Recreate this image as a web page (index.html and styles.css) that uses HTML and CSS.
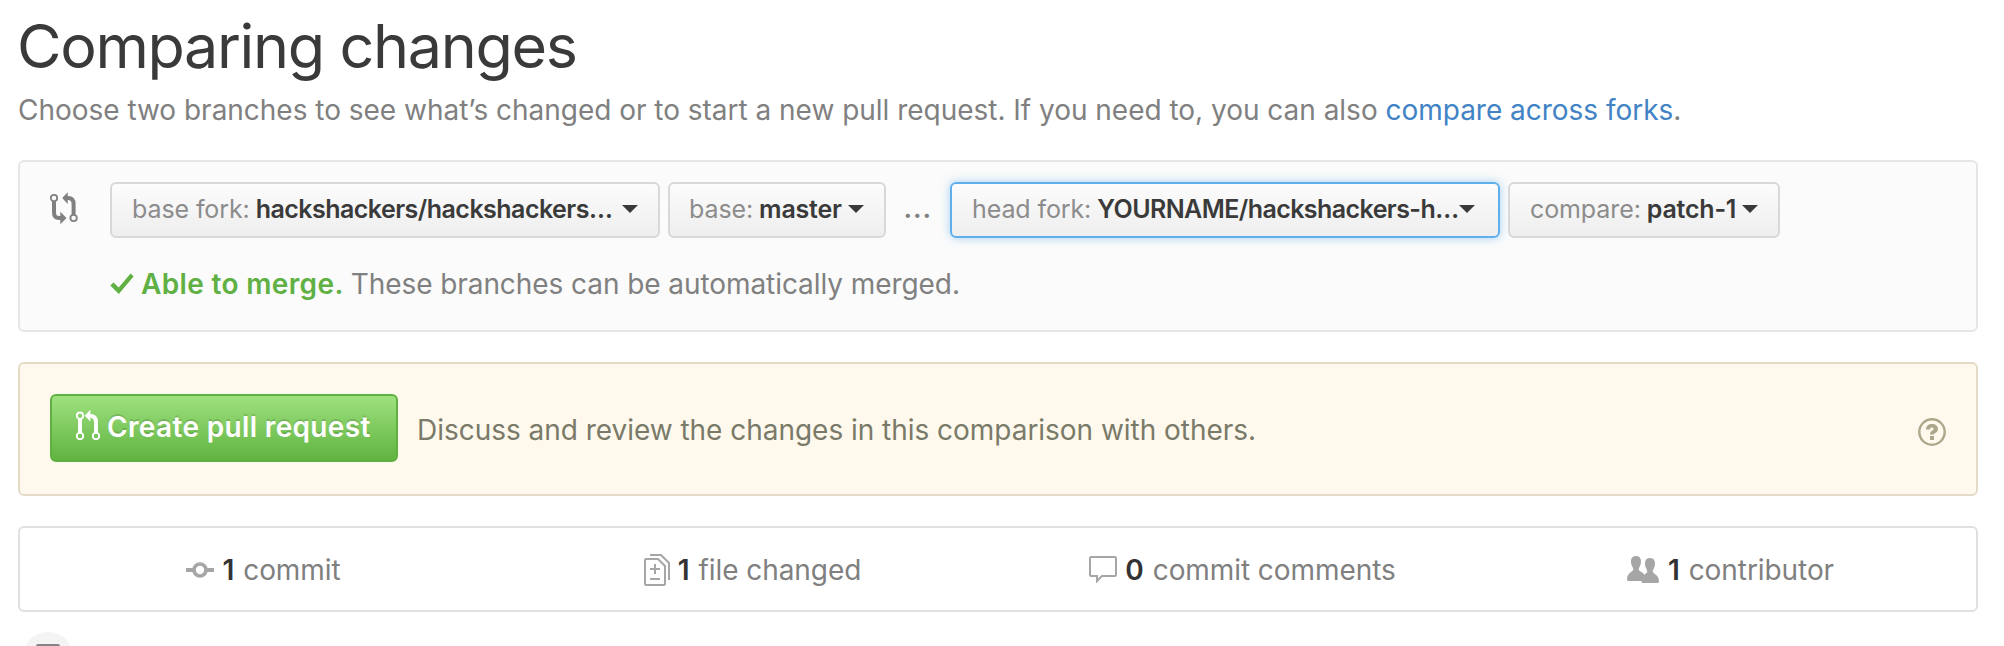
FILE: index.html
```
<!DOCTYPE html>
<html lang="en">
<head>
<meta charset="utf-8">
<title>Comparing changes</title>
<link rel="stylesheet" href="styles.css">
</head>
<body>
<main class="page">
  <header class="header">
    <h1 class="title">Comparing changes</h1>
    <p class="subtitle">Choose two branches to see what’s changed or to start a new pull request. If you need to, you can also <a class="link" href="#">compare across forks</a>.</p>
  </header>

  <section class="range">
    <svg class="range-icon" width="29" height="33" viewBox="0 0 29 33" fill="none" stroke="currentColor">
      <circle cx="5" cy="6" r="3.2" stroke-width="1.8"/>
      <circle cx="24.6" cy="26" r="3.2" stroke-width="1.8"/>
      <path d="M5 9.2V20.500q0 5.500 5 5.500h3M24.600 22.800V12q0-6-5.600-6h-2" stroke-width="4"/>
      <path d="M11.300 19.700l6.200 6.300-6.200 6.300zM18.700 .2v11.800L13.200 6z" fill="currentColor" stroke="none"/>
    </svg>
    <div class="range-main">
      <div class="branches">
        <button class="select select-fork"><span class="label">base fork:</span><b class="value">hackshackers/hackshackers…</b><i class="caret"></i></button>
        <button class="select select-base"><span class="label">base:</span><b class="value">master</b><i class="caret"></i></button>
        <span class="dots">...</span>
        <button class="select select-head"><span class="label">head fork:</span><b class="value">YOURNAME/hackshackers-h…</b><i class="caret"></i></button>
        <button class="select select-compare"><span class="label">compare:</span><b class="value">patch-1</b><i class="caret"></i></button>
      </div>
      <p class="merge">
        <svg class="check" width="24" height="22" viewBox="0 0 24 22"><path d="M20.600 .5L23.600 3.500 8.800 21 .3 12.600 3.500 9.500l5.200 5z" fill="currentColor"/></svg>
        <b class="able">Able to merge.</b><span>These branches can be automatically merged.</span>
      </p>
    </div>
  </section>

  <section class="banner">
    <button class="create">
      <svg class="create-icon" width="25" height="32" viewBox="0 0 25 32" fill="none" stroke="currentColor">
        <circle cx="4" cy="6.700" r="3.200" stroke-width="1.800"/>
        <circle cx="4" cy="27" r="3.200" stroke-width="1.800"/>
        <circle cx="20" cy="27" r="3.200" stroke-width="1.800"/>
        <path d="M4 9.900v13.900M20 23.800V13q0-6-6-6.300" stroke-width="4"/>
        <path d="M14.300 .8v11.800L8.700 6.700z" fill="currentColor" stroke="none"/>
      </svg>
      <span>Create pull request</span>
    </button>
    <p class="banner-text">Discuss and review the changes in this comparison with others.</p>
    <svg class="help" width="28" height="28" viewBox="0 0 28 28" fill="none" stroke="currentColor">
      <circle cx="14" cy="14" r="12.700" stroke-width="2.400"/>
      <path d="M8 11.500C8 8 10.500 6 14 6s6 2 6 5c0 4-4 3.500-4 5.500h-4c0-4 3.500-3.500 3.500-5.500 0-2-3.300-2-3.500.500zM12 18h4v4h-4z" fill="currentColor" stroke="none"/>
    </svg>
  </section>

  <ul class="stats">
    <li class="stat stat-commit">
      <svg class="stat-icon" width="28" height="16" viewBox="0 0 28 16" fill="none" stroke="currentColor" stroke-width="4"><circle cx="14" cy="8" r="6" stroke-width="3.600"/><path d="M0 8h7M21 8h7"/></svg>
      <b class="count">1</b><span>commit</span>
    </li>
    <li class="stat stat-file">
      <svg class="stat-icon" width="26" height="34" viewBox="0 0 26 34" fill="none" stroke="currentColor" stroke-width="2"><path d="M2 6h12l7 7v18q0 1-1 1H2q-1 0-1-1V7q0-1 1-1zM6 2h11l8 8v17M6 16h10M11 11v10M6 26h10"/></svg>
      <b class="count">1</b><span>file changed</span>
    </li>
    <li class="stat stat-comment">
      <svg class="stat-icon" width="28" height="28" viewBox="0 0 28 28" fill="none" stroke="currentColor" stroke-width="2"><path d="M2 1h24q1 0 1 1v17q0 1-1 1H13l-5 5v-5H2q-1 0-1-1V2q0-1 1-1z"/></svg>
      <b class="count">0</b><span>commit comments</span>
    </li>
    <li class="stat stat-people">
      <svg class="stat-icon" width="32" height="27" viewBox="0 0 32 27" fill="currentColor"><path d="M9 0c4.500 0 5.300 3.500 4.900 7-.3 3-2.200 4.500-2.200 6.500 0 2 5 2.500 5.800 6L15 25H1.500Q0 25 0 23.500C0 16 6.300 16 6.300 13.500c0-2-1.900-3.500-2.200-6.500C3.700 3.500 4.500 0 9 0z"/><path d="M23 2c4.500 0 5.300 3.500 4.900 7-.3 3-2.200 4.500-2.200 6.500C25.700 18 32 18 32 25.500Q32 27 30.500 27H16q-1.500 0-1.500-1.500C14.500 18 20.300 18 20.300 15.500c0-2-1.900-3.500-2.200-6.500C17.700 5.500 18.500 2 23 2z"/></svg>
      <b class="count">1</b><span>contributor</span>
    </li>
  </ul>

  <div class="timeline">
    <span class="badge"><i class="badge-mark"></i></span>
  </div>
</main>
</body>
</html>
```
FILE: styles.css
```
* { box-sizing: border-box; }

body {
  margin: 0;
  background: #fff;
  color: #808080;
  font: 28px/40px Inter, "Liberation Sans", sans-serif;
  letter-spacing: -0.07px;
}

.page {
  height: 646px;
  padding: 8px 26px 0 18px;
  overflow: hidden;
}

.header { height: 152px; }

.title {
  margin: 0 0 0 -1px;
  color: #3a3a3a;
  font-size: 61px;
  font-weight: 400;
  line-height: 76px;
  letter-spacing: -1.35px;
}

.subtitle {
  margin: 6px 0 0;
  letter-spacing: -0.02px;
  white-space: nowrap;
}

.link { color: #4183c4; text-decoration: none; }

p { margin: 0; }

.range {
  display: flex;
  height: 172px;
  padding: 20px 29px;
  border: 2px solid #e6e6e6;
  border-radius: 6px;
  background: #fbfbfb;
}

.range-icon { flex: none; margin: 10px 32px 0 0; }

.branches { display: flex; }

.select {
  display: flex;
  align-items: center;
  height: 56px;
  padding: 0 20px 2px;
  border: 2px solid #d8d8d8;
  border-radius: 6px;
  background: linear-gradient(#fcfcfc, #eee);
  color: #3a3a3a;
  font: 25px/40px Inter, "Liberation Sans", sans-serif;
  letter-spacing: -0.1px;
  white-space: nowrap;
}

.select-fork { width: 550px; }
.select-base { width: 218px; margin-left: 8px; padding-left: 19px; }
.select-head {
  width: 550px;
  padding-right: 19px;
  border-color: #5eb0ec;
  box-shadow: 0 0 10px rgba(81, 167, 232, 0.5);
}
.select-compare { width: 272px; margin-left: 8px; }

.label { color: #8c8c8c; }
.value { margin-left: 6px; font-weight: 600; letter-spacing: -0.2px; }
.select-fork .value { letter-spacing: -0.53px; }
.select-head .value { letter-spacing: -0.57px; }
.select-head .caret { margin-right: 4px; }

.caret {
  margin-left: auto;
  border: 8px solid transparent;
  border-top-color: #3a3a3a;
  border-bottom: 0;
}

.dots {
  width: 64px;
  padding-right: 1px;
  font-size: 30px;
  font-weight: 500;
  line-height: 50px;
  letter-spacing: 0.4px;
  text-align: center;
}

.merge {
  display: flex;
  align-items: center;
  margin-top: 26px;
  white-space: nowrap;
}

.check { margin-right: 7px; color: #60b044; }
.able { margin-right: 7px; color: #60b044; font-weight: 600; letter-spacing: 0.35px; }

.banner {
  display: flex;
  height: 134px;
  margin-top: 30px;
  padding: 30px;
  border: 2px solid #e4dcc8;
  border-radius: 6px;
  background: #fff9ed;
  color: #7a7a69;
}

.create {
  display: flex;
  width: 348px;
  height: 68px;
  padding: 13px 24px;
  border: 2px solid #60b044;
  border-radius: 6px;
  background: linear-gradient(#9ee07f, #60b440);
  color: #fff;
  font: 600 28px/36px Inter, "Liberation Sans", sans-serif;
  letter-spacing: 0.35px;
  text-shadow: 0 -2px 0 rgba(0, 0, 0, 0.13);
  white-space: nowrap;
}

.create-icon { flex: none; margin-right: 6px; }
.banner-text { margin: 16px 0 0 19px; letter-spacing: -0.03px; }
.help { margin: 24px 0 0 auto; color: #a9a88b; }

.stats {
  display: grid;
  grid-template-columns: repeat(4, 1fr);
  height: 86px;
  margin: 30px 0 0;
  padding: 0;
  border: 2px solid #e0e0e0;
  border-radius: 6px;
  list-style: none;
}

.stat {
  display: flex;
  align-items: center;
  justify-content: center;
  padding: 1px 2px 0 0;
  white-space: nowrap;
}

.stat-comment { padding-right: 0; }

.stat-icon { color: #a6a6a6; }
.count { margin: 0 9px 0 8px; color: #333; font-weight: 600; }
.stat-people .count { margin-left: 9px; }

.timeline { padding: 20px 0 0 5px; }

.badge {
  display: flex;
  justify-content: center;
  width: 50px;
  height: 50px;
  padding-top: 12px;
  border-radius: 50%;
  background: #f4f4f4;
}

.badge-mark {
  width: 24px;
  height: 20px;
  border: 3px solid #858585;
  border-radius: 2px;
}
```
